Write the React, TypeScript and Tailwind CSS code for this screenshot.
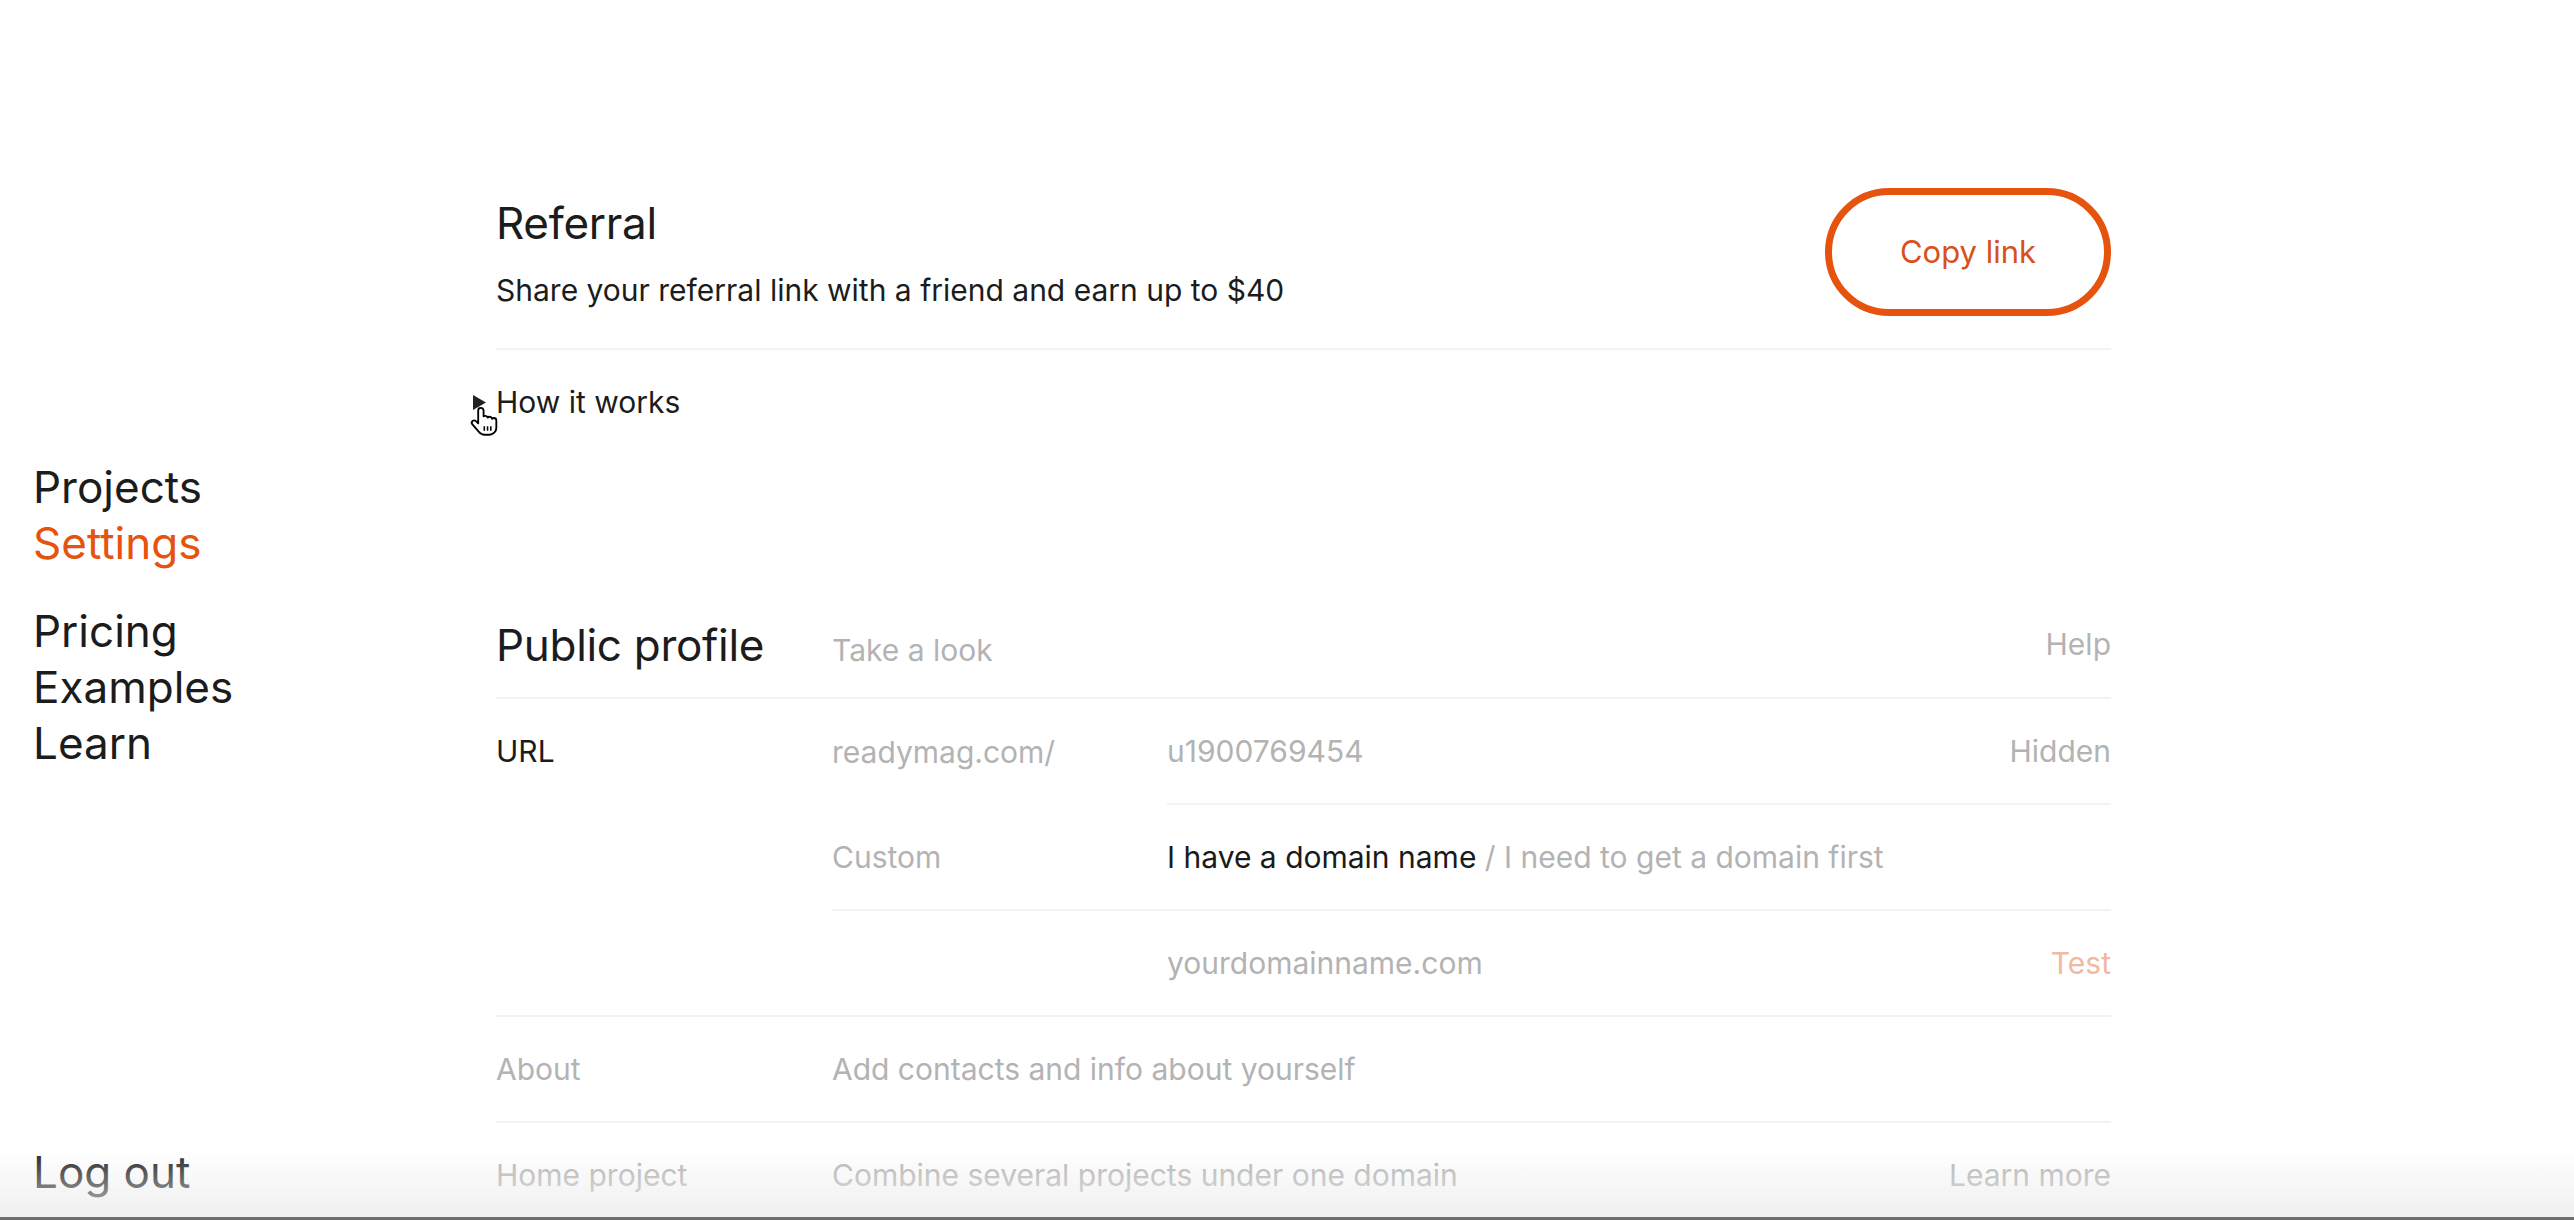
import React from "react";

const font = { fontFamily: "Inter, 'Noto Sans', sans-serif" };

const HandCursor = () => (
  <svg
    className="absolute left-[468px] top-[404px] pointer-events-none"
    width="34"
    height="36"
    viewBox="0 0 24 24"
  >
    <path
      d="M9 2c-1 0-1.8.8-1.8 1.8V13l-1.6-1.6c-.7-.7-1.8-.7-2.5 0-.6.6-.6 1.6 0 2.3l4.6 5.3c1 1.2 2.5 2 4.1 2h3.2c2.8 0 5-2.2 5-5v-5c0-1-.8-1.8-1.8-1.8-.5 0-.9.2-1.2.5-.2-.8-1-1.4-1.8-1.4-.5 0-1 .2-1.3.6-.3-.7-1-1.2-1.8-1.2-.4 0-.8.1-1.1.3V3.8C10.8 2.8 10 2 9 2z"
      fill="#fff"
      stroke="#000"
      strokeWidth="1.3"
      strokeLinejoin="round"
    />
    <path d="M11.5 15v3.2M13.8 15v3.2M16.1 15v3.2" stroke="#000" strokeWidth="1.1" />
  </svg>
);

const Row = ({ children, className = "" }) => (
  <div className={"flex items-center border-b-2 border-[#f3f3f3] " + className}>
    {children}
  </div>
);

export default function App() {
  return (
    <div className="relative w-[2574px] h-[1220px] overflow-hidden bg-white text-[#1c1c1c]" style={font}>
      <div className="flex h-full">
        {/* sidebar */}
        <aside className="w-[496px] shrink-0 flex flex-col pl-[33px] pb-[20px]">
          <div className="flex-1 flex flex-col pt-[459px] text-[44px] leading-[56px]">
            <a>Projects</a>
            <a className="text-[#e5530f]">Settings</a>
            <div className="h-[32px]" />
            <a>Pricing</a>
            <a>Examples</a>
            <a>Learn</a>
          </div>
          <a className="text-[44px] leading-[56px]">Log out</a>
        </aside>

        {/* main */}
        <main className="w-[1615px] pt-[188px] text-[30px] leading-[36px]">
          <div className="flex items-center justify-between">
            <div className="flex flex-col">
              <h1 className="text-[44px] leading-[53px] font-normal tracking-[-0.3px]">Referral</h1>
              <p className="mt-[22px]">Share your referral link with a friend and earn up to $40</p>
            </div>
            <button className="w-[286px] h-[128px] rounded-full border-[7px] border-[#e5530f] text-[#d9501a] text-[31px]">
              Copy link
            </button>
          </div>
          <div className="mt-[32px] h-[2px] bg-[#f3f3f3]" />

          <div className="mt-[34px] flex items-center -ml-[23px]">
            <svg width="13" height="15" viewBox="0 0 13 15" className="mr-[10px]">
              <polygon points="0,0 13,7.5 0,15" fill="#222" />
            </svg>
            <span>How it works</span>
          </div>

          <div className="mt-[173px]">
            <Row className="h-[106px]">
              <div className="w-[336px] text-[44px] leading-[53px] tracking-[-0.3px]">Public profile</div>
              <div className="flex-1 text-[#b3b3b3] mt-[10px]">Take a look</div>
              <div className="text-[#b3b3b3] -mt-[2px]">Help</div>
            </Row>

            <div className="flex border-b-2 border-[#f3f3f3]">
              <div className="w-[336px] h-[104px] flex items-center">URL</div>
              <div className="flex-1 flex flex-col">
                <div className="flex h-[106px]">
                  <div className="w-[335px] flex items-center text-[#b3b3b3]">readymag.com/</div>
                  <Row className="flex-1 justify-between">
                    <span className="text-[#b3b3b3]">u1900769454</span>
                    <span className="text-[#b3b3b3]">Hidden</span>
                  </Row>
                </div>
                <Row className="h-[106px]">
                  <div className="w-[335px] text-[#b3b3b3]">Custom</div>
                  <div>
                    <span className="text-[#1a1a1a]">I have a domain name</span>
                    <span className="text-[#b3b3b3]"> / I need to get a domain first</span>
                  </div>
                </Row>
                <div className="flex items-center h-[104px]">
                  <div className="w-[335px]" />
                  <div className="flex-1 text-[#b3b3b3]">yourdomainname.com</div>
                  <div className="text-[#f2b8a0]">Test</div>
                </div>
              </div>
            </div>

            <Row className="h-[106px]">
              <div className="w-[336px] text-[#b3b3b3]">About</div>
              <div className="flex-1 text-[#b3b3b3]">Add contacts and info about yourself</div>
            </Row>

            <Row className="h-[106px]">
              <div className="w-[336px] text-[#b3b3b3]">Home project</div>
              <div className="flex-1 text-[#b3b3b3]">Combine several projects under one domain</div>
              <div className="text-[#b3b3b3]">Learn more</div>
            </Row>
          </div>
        </main>
      </div>

      <HandCursor />

      {/* window edge shading */}
      <div className="absolute left-0 right-0 bottom-[3px] h-[70px] pointer-events-none bg-gradient-to-b from-transparent to-[#ececec]/80" />
      <div className="absolute left-0 right-0 bottom-0 h-[3px] bg-[#6e6e6e]" />
    </div>
  );
}
